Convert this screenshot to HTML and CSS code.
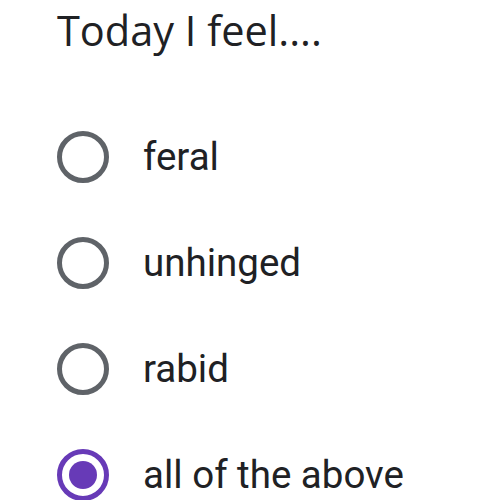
FILE: index.html
```html
<!DOCTYPE html>
<html>
<head>
<meta charset="utf-8">
<link rel="stylesheet" href="styles.css">
</head>
<body>
<div class="card">
  <div class="title">Today I feel....</div>
  <div class="options">
    <div class="option"><span class="radio"></span><span class="label">feral</span></div>
    <div class="option"><span class="radio"></span><span class="label">unhinged</span></div>
    <div class="option"><span class="radio"></span><span class="label">rabid</span></div>
    <div class="option"><span class="radio checked"></span><span class="label">all of the above</span></div>
  </div>
</div>
</body>
</html>
```
FILE: styles.css
```css
html, body {
  margin: 0;
  padding: 0;
  background: #ffffff;
}
.card {
  padding: 0 0 0 57px;
  font-family: Roboto, "Liberation Sans", sans-serif;
  color: #202124;
}
.title {
  font-family: "Open Sans", Roboto, sans-serif;
  font-size: 41.5px;
  line-height: 60px;
  height: 60px;
  letter-spacing: 0;
}
.options {
  display: flex;
  flex-direction: column;
  gap: 54px;
  margin-top: 71px;
}
.option {
  display: flex;
  align-items: center;
  height: 52px;
}
.radio {
  box-sizing: border-box;
  width: 52px;
  height: 52px;
  border: 5px solid #5f6368;
  border-radius: 50%;
  flex: none;
  display: flex;
  align-items: center;
  justify-content: center;
}
.radio.checked {
  border-color: #673ab7;
}
.radio.checked::after {
  content: "";
  width: 28px;
  height: 28px;
  border-radius: 50%;
  background: #673ab7;
}
.label {
  margin-left: 34px;
  font-size: 38.5px;
  line-height: 52px;
}
```
